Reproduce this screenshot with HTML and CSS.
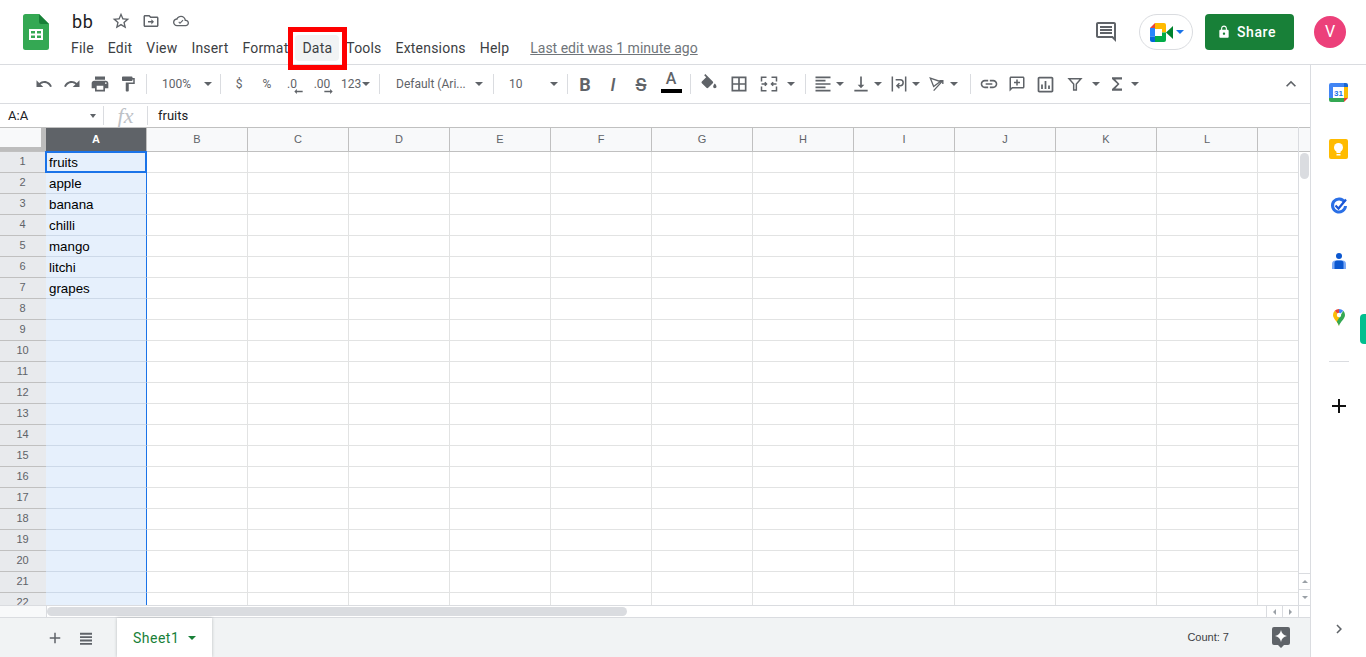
FILE: index.html
```html
<!DOCTYPE html>
<html>
  <head>
    <meta charset="utf-8" />
    <title>bb - Google Sheets</title>
    <link rel="stylesheet" href="styles.css">
  </head>
  <body>
    <header class="top-bar">
      <svg class="sheets-logo" viewBox="0 0 26 36">
        <path d="M16 0H2.5A2.5 2.5 0 0 0 0 2.500v31A2.500 2.500 0 0 0 2.500 36h21a2.500 2.500 0 0 0 2.500-2.500V10z" fill="#34a853"/>
        <path d="M16 0l10 10h-8a2 2 0 0 1-2-2z" fill="#188038"/>
        <path d="M6 15h14v11H6zm2 2v2.500h4V17zm6 0v2.500h4V17zM8 21.500V24h4v-2.500zm6 0V24h4v-2.500z" fill="#fff" fill-rule="evenodd"/>
      </svg>
      <div class="doc-info">
        <div class="doc-title-row">
          <span class="doc-title">bb</span>
          <span class="title-icon">
            <svg class="star-icon" viewBox="0 0 24 24"><path d="M22 9.240l-7.190-.62L12 2 9.190 8.630 2 9.240l5.460 4.730L5.820 21 12 17.270 18.180 21l-1.630-7.030L22 9.240zM12 15.400l-3.760 2.270 1-4.280-3.320-2.880 4.380-.38L12 6.100l1.710 4.040 4.380.38-3.320 2.880 1 4.280L12 15.400z"/></svg>
          </span>
          <span class="title-icon">
            <svg class="folder-icon" viewBox="0 0 24 24"><path d="M20 6h-8l-2-2H4c-1.100 0-2 .9-2 2v12c0 1.100.9 2 2 2h16c1.100 0 2-.9 2-2V8c0-1.100-.9-2-2-2zm0 12H4V6h5.170l2 2H20v10z"/><path d="M12.500 9.500L16 13l-3.500 3.500V14H8v-2h4.500z"/></svg>
          </span>
          <span class="title-icon">
            <svg class="cloud-icon" viewBox="0 0 24 24"><path d="M19.350 10.040C18.670 6.590 15.640 4 12 4 9.110 4 6.600 5.640 5.350 8.040 2.340 8.360 0 10.910 0 14c0 3.310 2.690 6 6 6h13c2.760 0 5-2.240 5-5 0-2.640-2.050-4.780-4.650-4.960zM19 18H6c-2.210 0-4-1.790-4-4s1.790-4 4-4h.71C7.370 7.690 9.480 6 12 6c3.040 0 5.500 2.460 5.500 5.500v.5H19c1.660 0 3 1.340 3 3s-1.340 3-3 3z"/><path d="M10.500 16.500L8 14l1.200-1.200 1.300 1.300 4-4 1.200 1.200z"/></svg>
          </span>
        </div>
        <nav class="menu-bar">
          <a class="menu-item">File</a>
          <a class="menu-item">Edit</a>
          <a class="menu-item">View</a>
          <a class="menu-item">Insert</a>
          <a class="menu-item">Format</a>
          <a class="menu-item menu-item-hover">Data</a>
          <a class="menu-item">Tools</a>
          <a class="menu-item">Extensions</a>
          <a class="menu-item">Help</a>
          <a class="last-edit">Last edit was 1 minute ago</a>
        </nav>
      </div>
      <div class="top-actions">
        <svg class="comments-icon" viewBox="0 0 24 24"><path d="M21.990 4c0-1.100-.89-2-1.990-2H4c-1.100 0-2 .9-2 2v12c0 1.100.9 2 2 2h14l4 4-.01-18zM20 4v13.170L18.830 16H4V4h16zM6 12h12v2H6zm0-3h12v2H6zm0-3h12v2H6z"/></svg>
        <div class="meet-pill">
          <svg class="meet-icon" viewBox="0 0 23 19">
            <path d="M16 9.500L23 3v13z" fill="#00832d"/>
            <path d="M5 0h9a2 2 0 0 1 2 2v4H5z" fill="#ffba00"/>
            <path d="M5 0L0 5h5z" fill="#ea4335"/>
            <path d="M0 5h5v8.500H0z" fill="#2684fc"/>
            <path d="M0 13.500h5V19H2a2 2 0 0 1-2-2z" fill="#0066da"/>
            <path d="M5 13h11v4a2 2 0 0 1-2 2H5z" fill="#00ac47"/>
            <path d="M12 6h4v3.500h-4z" fill="#ffba00"/>
            <path d="M12 9.500h4V13h-4z" fill="#00ac47"/>
          </svg>
          <span class="caret caret-blue"></span>
        </div>
        <button class="share-button">
          <svg class="lock-icon" viewBox="0 0 24 24"><path d="M18 8h-1V6c0-2.760-2.240-5-5-5S7 3.240 7 6v2H6c-1.100 0-2 .9-2 2v10c0 1.100.9 2 2 2h12c1.100 0 2-.9 2-2V10c0-1.100-.9-2-2-2zm-6 9c-1.100 0-2-.9-2-2s.9-2 2-2 2 .9 2 2-.9 2-2 2zm3.100-9H8.900V6c0-1.710 1.390-3.100 3.100-3.100 1.710 0 3.100 1.390 3.100 3.100v2z"/></svg>
          Share
        </button>
        <div class="avatar">V</div>
      </div>
    </header>

    <div class="workspace">
      <main class="sheet-area">
        <div class="toolbar">
          <div class="tool-group group-history">
            <span class="tool"><svg class="icon" viewBox="0 0 24 24"><path d="M12.500 8c-2.650 0-5.050.99-6.900 2.600L2 7v9h9l-3.620-3.620c1.390-1.160 3.160-1.880 5.120-1.880 3.540 0 6.550 2.310 7.600 5.500l2.370-.78C21.080 11.030 17.150 8 12.500 8z"/></svg></span>
            <span class="tool"><svg class="icon" viewBox="0 0 24 24"><path d="M18.400 10.600C16.550 8.990 14.150 8 11.500 8c-4.650 0-8.580 3.030-9.960 7.220L3.900 16c1.050-3.190 4.050-5.500 7.600-5.500 1.950 0 3.730.72 5.120 1.880L13 16h9V7l-3.600 3.600z"/></svg></span>
            <span class="tool"><svg class="icon icon-large" viewBox="0 0 24 24"><path d="M19 8H5c-1.660 0-3 1.340-3 3v6h4v4h12v-4h4v-6c0-1.660-1.340-3-3-3zm-3 11H8v-5h8v5zm3-7c-.55 0-1-.45-1-1s.45-1 1-1 1 .45 1 1-.45 1-1 1zm-1-9H6v4h12V3z"/></svg></span>
            <span class="tool"><svg class="icon" viewBox="0 0 24 24"><path d="M18 4V3c0-.55-.45-1-1-1H5c-.55 0-1 .45-1 1v4c0 .55.45 1 1 1h12c.55 0 1-.45 1-1V6h1v4H9v11c0 .55.45 1 1 1h2c.55 0 1-.45 1-1v-9h8V4h-3z"/></svg></span>
          </div>
          <span class="tool-sep"></span>
          <div class="tool-group group-select group-zoom"><span>100%</span><span class="caret"></span></div>
          <span class="tool-sep"></span>
          <div class="tool-group group-number">
            <span class="tool">$</span>
            <span class="tool">%</span>
            <span class="tool tool-decimal tool-decimal-less">.0<svg class="decimal-arrow" viewBox="0 0 10 6"><path d="M3 0L0 3l3 3V4h7V2H3z"/></svg></span>
            <span class="tool tool-decimal tool-decimal-more">.00<svg class="decimal-arrow" viewBox="0 0 10 6"><path d="M7 0l3 3-3 3V4H0V2h7z"/></svg></span>
            <span class="number-format">123</span><span class="caret"></span>
          </div>
          <span class="tool-sep"></span>
          <div class="tool-group group-select group-font"><span>Default (Ari...</span><span class="caret"></span></div>
          <span class="tool-sep"></span>
          <div class="tool-group group-select group-size"><span>10</span><span class="caret"></span></div>
          <span class="tool-sep"></span>
          <div class="tool-group group-style">
            <span class="tool tool-letter tool-bold">B</span>
            <span class="tool tool-letter tool-italic">I</span>
            <span class="tool tool-letter"><span class="strike-letter">S</span></span>
            <span class="tool tool-color"><span class="color-letter">A</span><span class="color-bar"></span></span>
          </div>
          <span class="tool-sep"></span>
          <div class="tool-group group-paint">
            <span class="tool"><svg class="icon icon-large" viewBox="0 0 24 24"><path d="M16.560 8.940L7.620 0 6.210 1.410l2.380 2.380-5.150 5.150c-.59.59-.59 1.540 0 2.120l5.500 5.500c.29.29.68.44 1.060.44s.77-.15 1.060-.44l5.500-5.500c.59-.58.59-1.530 0-2.120zM19 11.500s-2 2.170-2 3.500c0 1.100.9 2 2 2s2-.9 2-2c0-1.330-2-3.500-2-3.500z"/></svg></span>
            <span class="tool"><svg class="icon icon-large" viewBox="0 0 24 24"><path d="M3 3v18h18V3H3zm8 16H5v-6h6v6zm0-8H5V5h6v6zm8 8h-6v-6h6v6zm0-8h-6V5h6v6z"/></svg></span>
            <span class="tool"><svg class="icon icon-large icon-line" viewBox="0 0 24 24"><path d="M3 9V4h6M15 4h6v5M3 15v5h6M15 20h6v-5M3 12h5M21 12h-5M7 10l2 2-2 2M17 10l-2 2 2 2"/></svg></span>
            <span class="caret caret-after"></span>
          </div>
          <span class="tool-sep"></span>
          <div class="tool-group group-align">
            <span class="tool-pair"><svg class="icon icon-large" viewBox="0 0 24 24"><path d="M15 15H3v2h12v-2zm0-8H3v2h12V7zM3 13h18v-2H3v2zm0 8h18v-2H3v2zM3 3v2h18V3H3z"/></svg><span class="caret"></span></span>
            <span class="tool-pair"><svg class="icon icon-large" viewBox="0 0 24 24"><path d="M16 13h-3V3h-2v10H8l4 4 4-4zM4 19v2h16v-2H4z"/></svg><span class="caret"></span></span>
            <span class="tool-pair"><svg class="icon icon-large icon-line" viewBox="0 0 24 24"><path d="M4 3v18M20 3v18M8 7h5.500a3.500 3.500 0 0 1 0 7H10M12.500 11l-3 3 3 3"/></svg><span class="caret"></span></span>
            <span class="tool-pair"><svg class="icon icon-large icon-thin" viewBox="0 0 24 24"><path d="M4 5l12 4-8 6zM8 20L19 8M15 8h4v4"/></svg><span class="caret"></span></span>
          </div>
          <span class="tool-sep"></span>
          <div class="tool-group group-insert">
            <span class="tool"><svg class="icon icon-large" viewBox="0 0 24 24"><path d="M3.900 12c0-1.710 1.390-3.100 3.100-3.100h4V7H7c-2.760 0-5 2.240-5 5s2.240 5 5 5h4v-1.900H7c-1.710 0-3.100-1.390-3.100-3.100zM8 13h8v-2H8v2zm9-6h-4v1.900h4c1.710 0 3.100 1.390 3.100 3.100s-1.390 3.100-3.100 3.100h-4V17h4c2.760 0 5-2.240 5-5s-2.240-5-5-5z"/></svg></span>
            <span class="tool"><svg class="icon" viewBox="0 0 24 24"><path d="M20 2H4c-1.100 0-2 .9-2 2v18l4-4h14c1.100 0 2-.9 2-2V4c0-1.100-.9-2-2-2zm0 14H5.200L4 17.200V4h16v12z"/><path d="M11 6h2v3h3v2h-3v3h-2v-3H8V9h3z"/></svg></span>
            <span class="tool"><svg class="icon icon-chart" viewBox="0 0 24 24"><path d="M19 3H5c-1.100 0-2 .9-2 2v14c0 1.100.9 2 2 2h14c1.100 0 2-.9 2-2V5c0-1.100-.9-2-2-2zm0 16H5V5h14v14z"/><path d="M7 12h2v5H7zM11 8h2v9h-2zM15 13h2v4h-2z"/></svg></span>
            <span class="tool tool-filter"><svg class="icon icon-filter icon-filter-line" viewBox="0 0 24 24"><path d="M3 4h18l-7 8v9h-4v-9z"/></svg></span>
            <span class="caret caret-filter"></span>
            <span class="tool tool-sum"><svg class="icon icon-large" viewBox="0 0 24 24"><path d="M18 4H6v2l6.500 6L6 18v2h12v-2.500h-8l5-5.500-5-5.500h8z"/></svg></span>
            <span class="caret"></span>
          </div>
          <span class="tool tool-collapse"><svg class="icon icon-large" viewBox="0 0 24 24"><path d="M12 8l-6 6 1.410 1.410L12 10.830l4.590 4.580L18 14z"/></svg></span>
        </div>

        <div class="formula-bar">
          <div class="name-box"><span>A:A</span><span class="caret"></span></div>
          <span class="formula-sep"></span>
          <span class="fx-label">fx</span>
          <span class="formula-sep"></span>
          <span class="formula-value">fruits</span>
        </div>

        <div class="grid-wrap">
          <div class="grid">
            <div class="col-headers">
              <div class="corner"></div>
              <div class="col-header col-selected">A</div>
              <div class="col-header">B</div>
              <div class="col-header">C</div>
              <div class="col-header">D</div>
              <div class="col-header">E</div>
              <div class="col-header">F</div>
              <div class="col-header">G</div>
              <div class="col-header">H</div>
              <div class="col-header">I</div>
              <div class="col-header">J</div>
              <div class="col-header">K</div>
              <div class="col-header">L</div>
              <div class="col-header col-partial"></div>
            </div>
            <div class="active-cell"></div>
            <div class="row"><div class="row-num">1</div><div class="cell">fruits</div></div>
            <div class="row"><div class="row-num">2</div><div class="cell">apple</div></div>
            <div class="row"><div class="row-num">3</div><div class="cell">banana</div></div>
            <div class="row"><div class="row-num">4</div><div class="cell">chilli</div></div>
            <div class="row"><div class="row-num">5</div><div class="cell">mango</div></div>
            <div class="row"><div class="row-num">6</div><div class="cell">litchi</div></div>
            <div class="row"><div class="row-num">7</div><div class="cell">grapes</div></div>
            <div class="row"><div class="row-num">8</div><div class="cell"></div></div>
            <div class="row"><div class="row-num">9</div><div class="cell"></div></div>
            <div class="row"><div class="row-num">10</div><div class="cell"></div></div>
            <div class="row"><div class="row-num">11</div><div class="cell"></div></div>
            <div class="row"><div class="row-num">12</div><div class="cell"></div></div>
            <div class="row"><div class="row-num">13</div><div class="cell"></div></div>
            <div class="row"><div class="row-num">14</div><div class="cell"></div></div>
            <div class="row"><div class="row-num">15</div><div class="cell"></div></div>
            <div class="row"><div class="row-num">16</div><div class="cell"></div></div>
            <div class="row"><div class="row-num">17</div><div class="cell"></div></div>
            <div class="row"><div class="row-num">18</div><div class="cell"></div></div>
            <div class="row"><div class="row-num">19</div><div class="cell"></div></div>
            <div class="row"><div class="row-num">20</div><div class="cell"></div></div>
            <div class="row"><div class="row-num">21</div><div class="cell"></div></div>
            <div class="row"><div class="row-num">22</div><div class="cell"></div></div>
          </div>
          <div class="v-scroll">
            <div class="v-scroll-head"></div>
            <div class="v-scroll-thumb"></div>
            <div class="scroll-btn scroll-btn-first"><span class="mini-arrow mini-up"></span></div>
            <div class="scroll-btn"><span class="mini-arrow mini-down"></span></div>
          </div>
        </div>

        <div class="h-scroll">
          <div class="h-scroll-corner"></div>
          <div class="h-scroll-thumb"></div>
          <div class="h-btn"><span class="mini-arrow mini-left"></span></div>
          <div class="h-btn"><span class="mini-arrow mini-right"></span></div>
          <div class="h-scroll-end"></div>
        </div>

        <footer class="sheet-bar">
          <span class="bar-btn"><svg class="icon" viewBox="0 0 24 24"><path d="M19 13h-6v6h-2v-6H5v-2h6V5h2v6h6z"/></svg></span>
          <span class="bar-btn"><svg class="icon" viewBox="0 0 24 24"><path d="M4 5h16v2.500H4zM4 9.500h16V12H4zM4 14h16v2.500H4zM4 18.500h16V21H4z"/></svg></span>
          <div class="sheet-tab">Sheet1<span class="caret caret-green"></span></div>
          <span class="count-label">Count: 7</span>
          <svg class="explore-icon" viewBox="0 0 18 21">
            <path d="M2 0h14a2 2 0 0 1 2 2v14a2 2 0 0 1-2 2h-4l-3 3-3-3H2a2 2 0 0 1-2-2V2a2 2 0 0 1 2-2z" fill="#5f6368"/>
            <path d="M9 3c.6 3.400 2.600 5.400 6 6-3.400.6-5.400 2.600-6 6-.6-3.400-2.600-5.400-6-6 3.400-.6 5.400-2.600 6-6z" fill="#fff"/>
          </svg>
        </footer>
      </main>

      <aside class="side-panel">
        <svg class="side-icon side-calendar" viewBox="0 0 19 19">
          <path d="M2 0h13v4H4v11H0V2a2 2 0 0 1 2-2z" fill="#4285f4"/>
          <path d="M15 0h2a2 2 0 0 1 2 2v2h-4z" fill="#1967d2"/>
          <path d="M15 4h4v11h-4z" fill="#fbbc04"/>
          <path d="M0 15h15v4H2a2 2 0 0 1-2-2z" fill="#34a853"/>
          <path d="M15 15h4l-4 4z" fill="#ea4335"/>
          <path d="M4 4h11v11H4z" fill="#fff"/>
          <text class="calendar-day" x="9.500" y="12.500" text-anchor="middle">31</text>
        </svg>
        <svg class="side-icon side-keep" viewBox="0 0 19 20">
          <rect width="19" height="20" rx="2" fill="#ffbb00"/>
          <circle cx="9.500" cy="8.500" r="4.500" fill="#fff"/>
          <path d="M7.500 12h4v2h-4zM7.500 15h4v1.500h-4z" fill="#fff"/>
        </svg>
        <svg class="side-icon side-tasks" viewBox="0 0 18 18">
          <path d="M14.500 5A6.500 6.500 0 1 0 15.500 9" fill="none" stroke="#2a6fe6" stroke-width="3"/>
          <path d="M5.500 8.500l3 3L16 2.500" fill="none" stroke="#1a56d6" stroke-width="2.200"/>
        </svg>
        <svg class="side-icon side-contacts" viewBox="0 0 14 16">
          <circle cx="7" cy="3" r="3" fill="#0b57d0"/>
          <path d="M3.500 7.500h7a3.500 3.500 0 0 1 3.500 3.500v5H0v-5a3.500 3.500 0 0 1 3.500-3.500z" fill="#7baaf7"/>
          <path d="M5 7.500h4a2.500 2.500 0 0 1 2.500 2.500v6h-9v-6A2.500 2.500 0 0 1 5 7.500z" fill="#0b57d0"/>
        </svg>
        <svg class="side-icon side-maps" viewBox="0 0 12 17">
          <path d="M6 17C5 13 0 10 0 6a6 6 0 0 1 1.700-4.200L6 6z" fill="#fbbc04"/>
          <path d="M1.700 1.800A6 6 0 0 1 6 0v0L6 6 3.800 4z" fill="#ea4335"/>
          <path d="M6 0a6 6 0 0 1 4.300 1.800L6 6z" fill="#4285f4"/>
          <path d="M10.300 1.800A6 6 0 0 1 12 6c0 4-5 7-6 11-.4-1.500-1.300-2.900-2.200-4.200z" fill="#34a853"/>
          <circle cx="6" cy="6" r="2.200" fill="#fff"/>
        </svg>
        <div class="side-divider"></div>
        <svg class="side-icon side-add" viewBox="0 0 14 14"><path d="M6 0h2v6h6v2H8v6H6V8H0V6h6z" fill="#111"/></svg>
        <svg class="side-chevron" viewBox="0 0 24 24"><path d="M8.590 16.590L13.170 12 8.590 7.410 10 6l6 6-6 6z"/></svg>
        <div class="side-handle"></div>
      </aside>
    </div>

    <div class="annotation-box"></div>
  </body>
</html>
```

FILE: styles.css
```css
/* || Initial styles */

* {
  box-sizing: border-box;
}

html {
  font-family: Roboto, "Liberation Sans", sans-serif;
}

body {
  margin: 0;
  height: 657px;
  display: flex;
  flex-direction: column;
  overflow: hidden;
  background-color: white;
}

svg {
  display: block;
  flex: none;
}

.caret {
  display: inline-block;
  flex: none;
  width: 0;
  height: 0;
  border-left: 4px solid transparent;
  border-right: 4px solid transparent;
  border-top: 4px solid #5f6368;
}

.caret-blue {
  border-top-color: #1a73e8;
}

.caret-green {
  margin-left: 9px;
  border-top-color: #188038;
}

/* || Top bar */

.top-bar {
  height: 65px;
  display: flex;
  align-items: flex-start;
  padding-right: 20px;
  border-bottom: 1px solid #dadce0;
  flex: none;
}

.sheets-logo {
  width: 26px;
  height: 36px;
  margin: 14px 15px 0 23px;
}

.doc-title-row {
  height: 26px;
  margin-top: 8px;
  margin-bottom: 1px;
  padding-left: 8px;
  display: flex;
  align-items: center;
}

.doc-title {
  width: 34px;
  font-size: 18px;
  letter-spacing: 0.6px;
  color: #202124;
}

.title-icon {
  width: 30px;
  display: flex;
  justify-content: center;
  fill: #5f6368;
}

.star-icon {
  width: 20px;
  height: 20px;
}

.folder-icon {
  width: 18px;
  height: 18px;
}

.cloud-icon {
  width: 16px;
  height: 16px;
}

.menu-bar {
  height: 26px;
  display: flex;
  align-items: center;
  font-size: 14px;
  color: #3c4043;
}

.menu-item {
  height: 26px;
  line-height: 26px;
  padding: 0 7px;
  border-radius: 4px;
  letter-spacing: 0.2px;
}

.menu-item-hover {
  background-color: #f1f3f4;
}

.last-edit {
  margin-left: 14px;
  color: #70757a;
  text-decoration: underline;
}

.top-actions {
  margin-left: auto;
  height: 64px;
  display: flex;
  align-items: center;
}

.comments-icon {
  width: 24px;
  height: 24px;
  fill: #5f6368;
  margin-right: 21px;
}

.meet-pill {
  width: 54px;
  height: 36px;
  margin-right: 12px;
  padding-left: 10px;
  display: flex;
  align-items: center;
  gap: 3px;
  border: 1px solid #dadce0;
  border-radius: 18px;
}

.meet-icon {
  width: 23px;
  height: 19px;
}

.share-button {
  width: 89px;
  height: 36px;
  margin-right: 20px;
  padding: 0 0 0 12px;
  display: flex;
  align-items: center;
  gap: 6px;
  border: 0;
  border-radius: 4px;
  background-color: #188038;
  color: white;
  font-family: inherit;
  font-size: 14px;
  font-weight: 500;
  letter-spacing: 0.6px;
}

.lock-icon {
  width: 14px;
  height: 14px;
  fill: white;
}

.avatar {
  width: 32px;
  height: 32px;
  border-radius: 50%;
  background-color: #ec407a;
  color: white;
  font-size: 16px;
  line-height: 32px;
  text-align: center;
}

/* || Workspace */

.workspace {
  flex: 1;
  min-height: 0;
  display: flex;
}

.sheet-area {
  flex: 1;
  min-width: 0;
  display: flex;
  flex-direction: column;
}

/* || Toolbar */

.toolbar {
  height: 39px;
  flex: none;
  display: flex;
  align-items: center;
  border-bottom: 1px solid #dadce0;
  font-size: 12px;
  color: #5f6368;
}

.tool-group {
  display: flex;
  align-items: center;
  flex: none;
}

.tool {
  width: 28px;
  height: 24px;
  flex: none;
  display: flex;
  align-items: center;
  justify-content: center;
}

.tool-pair {
  display: flex;
  align-items: center;
  gap: 1px;
}

.tool-pair .icon {
  margin: 0 2px;
}

.icon {
  width: 18px;
  height: 18px;
  fill: #5f6368;
}

.icon-large {
  width: 20px;
  height: 20px;
}

.icon-chart {
  width: 21px;
  height: 21px;
}

.icon-filter {
  width: 16px;
  height: 16px;
}

.icon-line {
  fill: none;
  stroke: #5f6368;
  stroke-width: 1.8;
}

.icon-thin {
  fill: none;
  stroke: #5f6368;
  stroke-width: 1.6;
}

.icon-filter-line {
  fill: none;
  stroke: #5f6368;
  stroke-width: 2.2;
}

.tool-sep {
  width: 1px;
  height: 20px;
  flex: none;
  background-color: #dadce0;
}

.group-history {
  width: 146px;
  padding-left: 30px;
}

.group-select {
  justify-content: space-between;
}

.group-zoom {
  width: 73px;
  padding: 0 8px 0 15px;
}

.group-number {
  width: 158px;
  padding-left: 4px;
}

.tool-decimal {
  position: relative;
}

.tool-decimal-less {
  width: 22px;
}

.tool-decimal-more {
  width: 38px;
}

.decimal-arrow {
  position: absolute;
  left: 50%;
  bottom: 2px;
  width: 9px;
  height: 5px;
  margin-left: 2px;
  fill: #5f6368;
}

.number-format {
  width: 21px;
}

.group-font {
  width: 113px;
  padding: 0 10px 0 16px;
}

.group-size {
  width: 73px;
  padding: 0 9px 0 15px;
}

.group-style {
  width: 122px;
  padding-left: 3px;
}

.tool-letter {
  font-size: 18px;
  font-weight: 500;
}

.tool-bold {
  font-weight: 700;
}

.tool-italic {
  font-style: italic;
}

.strike-letter {
  text-decoration: line-through;
  text-decoration-thickness: 2px;
}

.tool-color {
  margin-left: 2px;
  height: 30px;
  flex-direction: column;
  justify-content: flex-start;
  gap: 1px;
}

.color-letter {
  font-size: 16px;
  font-weight: 500;
  line-height: 19px;
}

.color-bar {
  width: 21px;
  height: 4px;
  background-color: black;
}

.group-paint {
  width: 114px;
  padding-left: 4px;
  gap: 2px;
}

.caret-after {
  margin-left: 2px;
}

.group-align {
  width: 164px;
  padding-left: 5px;
  gap: 5px;
}

.group-insert {
  padding-left: 4px;
}

.tool-filter {
  margin-left: 2px;
}

.caret-filter {
  margin-left: 3px;
}

.tool-sum {
  margin-left: 3px;
}

.tool-collapse {
  margin-left: auto;
  margin-right: 5px;
}

/* || Formula bar */

.formula-bar {
  height: 23px;
  flex: none;
  display: flex;
  align-items: center;
  font-size: 13px;
  color: #202124;
}

.name-box {
  width: 103px;
  padding: 0 7px 0 8px;
  display: flex;
  align-items: center;
  justify-content: space-between;
}

.name-box .caret {
  border-left-width: 3.5px;
  border-right-width: 3.5px;
}

.formula-sep {
  width: 1px;
  height: 19px;
  flex: none;
  background-color: #dadce0;
}

.fx-label {
  width: 43px;
  text-align: center;
  font-family: "Liberation Serif", serif;
  font-style: italic;
  font-size: 22px;
  line-height: 20px;
  color: #bdc1c6;
}

.formula-value {
  padding-left: 10px;
}

/* || Grid */

.grid-wrap {
  flex: 1;
  min-height: 0;
  display: flex;
  overflow: hidden;
}

.grid {
  flex: 1;
  min-width: 0;
  position: relative;
  overflow: hidden;
  font-family: "Liberation Sans", sans-serif;
}

.col-headers {
  height: 25px;
  display: flex;
  border-top: 1px solid #c0c0c0;
  border-bottom: 1px solid #c0c0c0;
  background-color: #f8f9fa;
  font-size: 11px;
  color: #5f6368;
}

.corner {
  width: 46px;
  flex: none;
  background-color: #f8f9fa;
  border-right: 5px solid #bdbdbd;
  border-bottom: 4px solid #bdbdbd;
  background-clip: padding-box;
}

.col-header {
  width: 101px;
  flex: none;
  line-height: 23px;
  text-align: center;
  border-right: 1px solid #c0c0c0;
}

.col-selected {
  background-color: #5f6368;
  color: white;
  font-weight: 700;
}

.col-partial {
  flex: 1;
  border-right: 0;
}

.row {
  height: 21px;
  display: flex;
  border-bottom: 1px solid #e2e3e3;
  background-image: repeating-linear-gradient(90deg, transparent 0 100px, #e2e3e3 100px 101px);
  background-position: 46px 0;
  font-size: 13.330px;
  color: black;
}

.row-num {
  width: 46px;
  flex: none;
  margin-bottom: -1px;
  padding-right: 1px;
  background-color: #e8eaed;
  border-bottom: 1px solid #c0c0c0;
  font-size: 11px;
  line-height: 19px;
  text-align: center;
  color: #5f6368;
}

.cell {
  width: 101px;
  flex: none;
  margin-bottom: -1px;
  padding: 1px 3px 0;
  background-color: #e6f0fc;
  border-right: 1px solid #1a73e8;
  border-bottom: 1px solid #cdd9e8;
  line-height: 19px;
}

.active-cell {
  position: absolute;
  left: 45px;
  top: 24px;
  width: 102px;
  height: 22px;
  border: 2px solid #1a73e8;
  z-index: 1;
}

/* || Scrollbars */

.v-scroll {
  width: 12px;
  flex: none;
  display: flex;
  flex-direction: column;
  border-left: 1px solid #dadce0;
}

.v-scroll-head {
  height: 25px;
  flex: none;
  background-color: #f8f9fa;
  border-top: 1px solid #c0c0c0;
  border-bottom: 1px solid #c0c0c0;
}

.v-scroll-thumb {
  width: 9px;
  height: 26px;
  flex: none;
  margin: 1px 0 0 1px;
  border-radius: 5px;
  background-color: #dadce0;
}

.scroll-btn {
  height: 16px;
  flex: none;
  display: flex;
  align-items: center;
  justify-content: center;
  border-top: 1px solid #dadce0;
}

.scroll-btn-first {
  margin-top: auto;
}

.mini-arrow {
  width: 0;
  height: 0;
  border: 3px solid transparent;
}

.mini-up {
  border-top: 0;
  border-bottom-color: #9aa0a6;
}

.mini-down {
  border-bottom: 0;
  border-top-color: #9aa0a6;
}

.mini-left {
  border-left: 0;
  border-right-color: #9aa0a6;
}

.mini-right {
  border-right: 0;
  border-left-color: #9aa0a6;
}

.h-scroll {
  height: 12px;
  flex: none;
  display: flex;
  align-items: center;
  border-top: 1px solid #dadce0;
}

.h-scroll-corner {
  width: 47px;
  height: 100%;
  flex: none;
  background-color: #f8f9fa;
  border-right: 1px solid #dadce0;
}

.h-scroll-thumb {
  width: 580px;
  height: 9px;
  flex: none;
  margin-right: auto;
  border-radius: 5px;
  background-color: #dadce0;
}

.h-btn {
  width: 16px;
  height: 100%;
  flex: none;
  display: flex;
  align-items: center;
  justify-content: center;
  border-left: 1px solid #dadce0;
}

.h-scroll-end {
  width: 12px;
  height: 100%;
  flex: none;
  border-left: 1px solid #dadce0;
}

/* || Sheet bar */

.sheet-bar {
  height: 40px;
  flex: none;
  display: flex;
  align-items: center;
  padding: 0 20px 0 40px;
  border-top: 1px solid #dadce0;
  background-color: #f1f3f4;
}

.bar-btn {
  width: 30px;
  flex: none;
  margin-right: 1px;
  display: flex;
  justify-content: center;
}

.sheet-tab {
  height: 39px;
  width: 95px;
  margin-left: 15px;
  padding-left: 16px;
  display: flex;
  align-items: center;
  background-color: white;
  box-shadow: 0 0 3px rgba(60, 64, 67, 0.3);
  font-size: 14px;
  letter-spacing: 0.5px;
  color: #188038;
}

.count-label {
  margin-left: auto;
  margin-right: 43px;
  margin-bottom: 2px;
  font-family: "Liberation Sans", sans-serif;
  font-size: 11px;
  color: #3c4043;
}

.explore-icon {
  width: 18px;
  height: 21px;
}

/* || Side panel */

.side-panel {
  width: 56px;
  flex: none;
  position: relative;
  display: flex;
  flex-direction: column;
  align-items: center;
  padding-top: 18px;
  border-left: 1px solid #dadce0;
}

.side-icon {
  flex: none;
}

.side-calendar {
  width: 19px;
  height: 19px;
  margin-bottom: 37px;
}

.calendar-day {
  font-family: "Liberation Sans", sans-serif;
  font-size: 8px;
  font-weight: 700;
  fill: #1a73e8;
}

.side-keep {
  width: 19px;
  height: 20px;
  margin-bottom: 38px;
}

.side-tasks {
  width: 18px;
  height: 18px;
  margin-bottom: 38px;
}

.side-contacts {
  width: 14px;
  height: 16px;
  margin-bottom: 40px;
}

.side-maps {
  width: 12px;
  height: 17px;
}

.side-divider {
  width: 20px;
  height: 1px;
  margin-top: 35px;
  flex: none;
  background-color: #dadce0;
}

.side-add {
  width: 14px;
  height: 14px;
  margin-top: 37px;
}

.side-chevron {
  width: 18px;
  height: 18px;
  margin-top: auto;
  margin-bottom: 19px;
  fill: #5f6368;
}

.side-handle {
  position: absolute;
  right: 0;
  top: 249px;
  width: 6px;
  height: 30px;
  border-radius: 4px 0 0 4px;
  background-color: #00bf8f;
}

/* || Annotation drawn over the screenshot */

.annotation-box {
  position: absolute;
  left: 288px;
  top: 27px;
  width: 59px;
  height: 43px;
  border: 5px solid #fe0000;
}
```
